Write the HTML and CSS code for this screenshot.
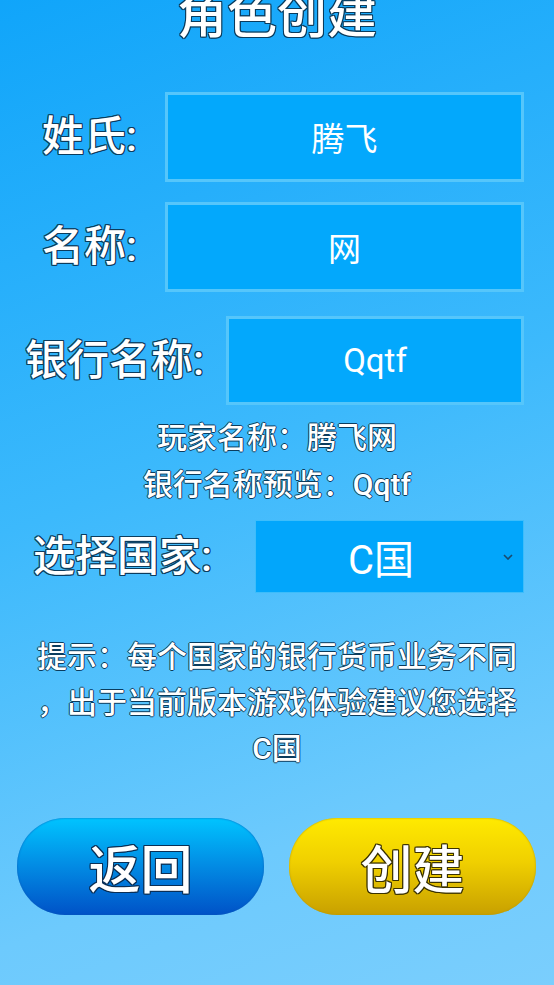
FILE: index.html
```html
<!DOCTYPE html>
<html lang="zh-CN">
<head>
    <meta charset="UTF-8">
    <meta name="viewport" content="width=device-width, initial-scale=1.0">
    <title>角色创建</title>
    <link rel="stylesheet" href="styles.css">
</head>
<body>
    <div class="page">
        <h1 class="title">角色创建</h1>

        <div class="row row-name">
            <label class="label" for="surname">姓氏:</label>
            <div class="field" id="surname">腾飞</div>
        </div>
        <div class="row row-name row-second">
            <label class="label" for="name">名称:</label>
            <div class="field" id="name">网</div>
        </div>
        <div class="row row-bank">
            <label class="label" for="bank">银行名称:</label>
            <div class="field" id="bank">Qqtf</div>
        </div>

        <div class="preview">
            <p>玩家名称：腾飞网</p>
            <p>银行名称预览：Qqtf</p>
        </div>

        <div class="row row-country">
            <label class="label" for="country">选择国家:</label>
            <div class="select" id="country">
                <span>C国</span>
                <svg class="arrow" width="10" height="6" viewBox="0 0 10 6">
                    <path d="M1 1 L5 5 L9 1" fill="none" stroke="#1b4a6b" stroke-width="1.6"/>
                </svg>
            </div>
        </div>

        <p class="tip">提示：每个国家的银行货币业务不同<br>，出于当前版本游戏体验建议您选择<br>C国</p>

        <div class="buttons">
            <button class="btn btn-back">返回</button>
            <button class="btn btn-create">创建</button>
        </div>
    </div>
</body>
</html>
```

FILE: styles.css
```css
* {
    box-sizing: border-box;
    margin: 0;
}
body {
    width: 554px;
    height: 985px;
    overflow: hidden;
    background: linear-gradient(160deg, #10a5fa 0%, #3cb9fc 45%, #6dcafd 80%, #7acefd 100%);
    font-family: Roboto, "Noto Sans CJK SC", sans-serif;
    font-weight: 500;
    color: #fff;
}
.page {
    display: flex;
    flex-direction: column;
}
.title {
    margin-top: -10px;
    font-size: 50px;
    line-height: 52px;
    font-weight: 500;
    text-align: center;
    text-shadow: -1px 0 #0b3c5d, 1px 0 #0b3c5d, 0 -1px #0b3c5d, 0 1px #0b3c5d, 1px 1px #0b3c5d, -1px -1px #0b3c5d, 1px -1px #0b3c5d, -1px 1px #0b3c5d;
}
.row {
    display: flex;
    align-items: center;
    justify-content: space-between;
    padding-right: 30px;
}
.label {
    font-size: 42px;
    line-height: 50px;
    text-shadow: -1px 0 #0b3c5d, 1px 0 #0b3c5d, 0 -1px #0b3c5d, 0 1px #0b3c5d, 1px 1px #0b3c5d, -1px -1px #0b3c5d, 1px -1px #0b3c5d, -1px 1px #0b3c5d;
}
.field {
    display: flex;
    align-items: center;
    justify-content: center;
    height: 90px;
    border: 3px solid #55c6fb;
    background-color: #03a8fc;
    font-size: 33px;
    font-weight: 400;
}
.row-name {
    margin-top: 50px;
    padding-left: 42px;
}
.row-name .field {
    width: 359px;
}
.row-second {
    margin-top: 20px;
}
.row-bank {
    margin-top: 24px;
    padding-left: 25px;
}
.row-bank .field {
    width: 298px;
    height: 89px;
}
.preview {
    margin-top: 9px;
    text-align: center;
    font-size: 30px;
    line-height: 47px;
    text-shadow: -1px 0 #0b3c5d, 1px 0 #0b3c5d, 0 -1px #0b3c5d, 0 1px #0b3c5d;
}
.row-country {
    margin-top: 12px;
    padding-left: 33px;
}
.select {
    display: flex;
    align-items: center;
    justify-content: center;
    position: relative;
    width: 269px;
    height: 73px;
    padding-right: 17px;
    border: 1px solid #3dbdfb;
    background-color: #02a6fb;
    font-size: 40px;
    font-weight: 400;
}
.select .arrow {
    position: absolute;
    right: 10px;
    top: 33px;
}
.tip {
    margin-top: 41px;
    text-align: center;
    font-size: 30px;
    line-height: 46px;
    text-shadow: -1px 0 #0b3c5d, 1px 0 #0b3c5d, 0 -1px #0b3c5d, 0 1px #0b3c5d;
}
.buttons {
    display: flex;
    justify-content: space-between;
    padding: 0 18px 0 17px;
    margin-top: 46px;
}
.btn {
    width: 247px;
    height: 97px;
    border: none;
    border-radius: 48px;
    font-family: "Noto Sans CJK SC", sans-serif;
    font-size: 52px;
    font-weight: 500;
    color: #fff;
    cursor: pointer;
}
.btn-back {
    background: linear-gradient(180deg, #00c4ff 0%, #0290e6 45%, #0052c7 100%);
    box-shadow: inset 0 0 2px #0b5bb8;
    text-shadow: -1px 0 #0b2f55, 1px 0 #0b2f55, 0 -1px #0b2f55, 0 1px #0b2f55, 1px 1px #0b2f55, -1px -1px #0b2f55, 1px -1px #0b2f55, -1px 1px #0b2f55;
}
.btn-create {
    background: linear-gradient(180deg, #ffea00 0%, #f0d000 45%, #c8a000 100%);
    box-shadow: inset 0 0 2px #b89600;
    text-shadow: -1px 0 #3a3200, 1px 0 #3a3200, 0 -1px #3a3200, 0 1px #3a3200, 1px 1px #3a3200, -1px -1px #3a3200, 1px -1px #3a3200, -1px 1px #3a3200;
}
```
